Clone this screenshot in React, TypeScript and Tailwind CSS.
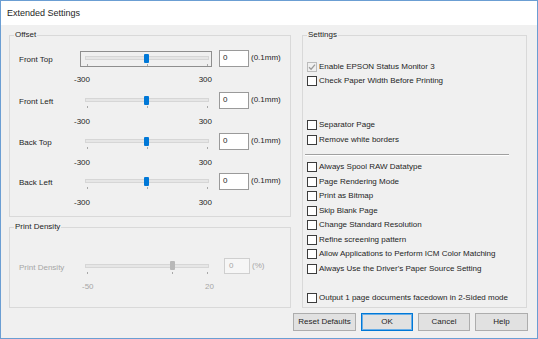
import type { ReactNode } from 'react';

const FONT = "font-['Liberation_Sans',Arial,sans-serif]";

function Group({ title, className, children }: { title: string; className: string; children: ReactNode }) {
  return (
    <div className={`flex flex-col border border-[#d9d9d9] ${className}`}>
      <div className="-mt-[6px] ml-[4px] self-start bg-[#f0f0f0] px-[1px] text-[8px] leading-[10px] text-[#1e1e1e]">
        {title}
      </div>
      {children}
    </div>
  );
}

interface SliderProps {
  focused?: boolean;
  disabled?: boolean;
  thumb: number;
  ticks: number[];
}

function Slider({ focused, disabled, thumb, ticks }: SliderProps) {
  return (
    <div className="relative h-[18px] w-[132px] shrink-0">
      {focused && <div className="absolute inset-x-0 top-[2px] h-[16px] border border-[#8e8e8e]" />}
      <div className="absolute left-[5px] right-[3px] top-[7px] h-[4px] border border-[#d6d6d6] bg-[#e6e6e6]" />
      {ticks.map((t) => (
        <div key={t} className="absolute top-[15px] h-[2px] w-[1px] bg-[#a8a8a8]" style={{ left: t }} />
      ))}
      <div
        className={`absolute top-[4.5px] h-[9px] w-[5px] rounded-[1px] ${disabled ? 'bg-[#b8b8b8]' : 'bg-[#0078d7]'}`}
        style={{ left: thumb - 2.5 }}
      />
    </div>
  );
}

function OffsetRow({ label, h, focused }: { label: string; h: string; focused?: boolean }) {
  return (
    <div className={`flex flex-col pl-[9px] ${h}`}>
      <div className="flex h-[18px] items-center">
        <div className="w-[61px] shrink-0 translate-y-[2px]">{label}</div>
        <Slider focused={focused} thumb={66.5} ticks={[7, 67, 127]} />
        <div className="ml-[7px] flex h-[17px] w-[30px] items-center border border-[#9a9a9a] bg-white pl-[3px]">0</div>
        <div className="ml-[2px]">(0.1mm)</div>
      </div>
      <div className="ml-[55px] mt-[7.5px] flex w-[138px] justify-between leading-[10px]">
        <span>-300</span>
        <span>300</span>
      </div>
    </div>
  );
}

function Check({ label, checked, disabled, className = '' }: { label: string; checked?: boolean; disabled?: boolean; className?: string }) {
  return (
    <div className={`flex h-[14.5px] items-center pl-[4px] ${className}`}>
      <div
        className={`flex h-[10px] w-[10px] items-center justify-center border ${
          disabled ? 'border-[#bcbcbc] bg-[#f0f0f0]' : 'border-[#3c3c3c] bg-white'
        }`}
      >
        {checked && (
          <svg width="8" height="8" viewBox="0 0 8 8">
            <path d="M1 4.2 L3.1 6.2 L7 1.6" fill="none" stroke="#9c9c9c" strokeWidth="1.3" />
          </svg>
        )}
      </div>
      <span className="ml-[2px] whitespace-nowrap">{label}</span>
    </div>
  );
}

const MIDDLE = [
  'Always Spool RAW Datatype',
  'Page Rendering Mode',
  'Print as Bitmap',
  'Skip Blank Page',
  'Change Standard Resolution',
  'Refine screening pattern',
  'Allow Applications to Perform ICM Color Matching',
  "Always Use the Driver's Paper Source Setting",
];

function Button({ label, primary, w }: { label: string; primary?: boolean; w: string }) {
  return (
    <div
      className={`flex h-[18px] items-center justify-center bg-[#e1e1e1] ${w} ${
        primary ? 'border border-[#0078d7] shadow-[inset_0_0_0_1px_#6aaee6]' : 'border border-[#adadad]'
      }`}
    >
      {label}
    </div>
  );
}

export default function App() {
  return (
    <div className={`flex h-[339px] w-[538px] flex-col border border-[#6b9ed3] text-[8px] leading-[10px] text-[#1e1e1e] ${FONT}`}>
      <div className="flex h-[24px] shrink-0 items-center bg-white pl-[6px] text-[9px]">Extended Settings</div>

      <div className="flex flex-1 flex-col bg-[#f0f0f0] pl-[8px] pr-[10px] pt-[10px]">
        <div className="flex gap-[11px]">
          {/* left column */}
          <div className="flex w-[282px] flex-col gap-[10px]">
            <Group title="Offset" className="h-[182px]">
              <div className="flex flex-col pt-[9px]">
                <OffsetRow label="Front Top" h="h-[42px]" focused />
                <OffsetRow label="Front Left" h="h-[41px]" />
                <OffsetRow label="Back Top" h="h-[40px]" />
                <OffsetRow label="Back Left" h="h-[40px]" />
              </div>
            </Group>

            <Group title="Print Density" className="h-[81px]">
              <div className="flex flex-col pl-[9px] pt-[24.5px] text-[#a6a6a6]">
                <div className="flex h-[18px] items-center">
                  <div className="w-[61px] shrink-0 translate-y-[1.5px]">Print Density</div>
                  <Slider disabled thumb={92} ticks={[7, 92, 127]} />
                  <div className="ml-[12px] flex h-[16px] w-[26px] items-center border border-[#cfcfcf] bg-[#f6f6f6] pl-[4px]">0</div>
                  <div className="ml-[2px]">(%)</div>
                </div>
                <div className="ml-[63px] mt-[7.5px] flex w-[132px] justify-between leading-[10px]">
                  <span>-50</span>
                  <span>20</span>
                </div>
              </div>
            </Group>
          </div>

          {/* settings */}
          <Group title="Settings" className="h-[273px] w-[225px]">
            <div className="flex flex-col pt-[19.25px]">
              <Check label="Enable EPSON Status Monitor 3" checked disabled />
              <Check label="Check Paper Width Before Printing" />
              <Check label="Separator Page" className="mt-[29.5px]" />
              <Check label="Remove white borders" />
              <div className="ml-[2px] mt-[7px] h-[2px] w-[204px] border-b border-t border-b-white border-t-[#a0a0a0]" />
              <div className="mt-[4px] flex flex-col">
                {MIDDLE.map((m) => (
                  <Check key={m} label={m} />
                ))}
              </div>
              <Check label="Output 1 page documents facedown in 2-Sided mode" className="mt-[15px]" />
            </div>
          </Group>
        </div>

        <div className="-mr-[1px] mt-[5px] flex justify-end gap-[5px]">
          <Button label="Reset Defaults" w="w-[63px]" />
          <Button label="OK" w="w-[52px]" primary />
          <Button label="Cancel" w="w-[52px]" />
          <Button label="Help" w="w-[53px]" />
        </div>
      </div>
    </div>
  );
}
